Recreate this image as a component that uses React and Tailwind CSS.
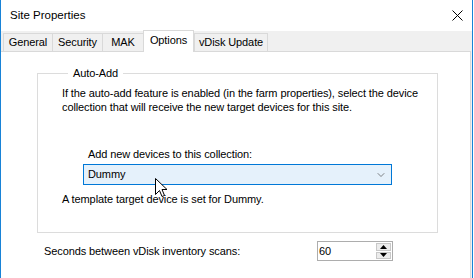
import { ChevronDown } from "lucide-react";

const tabs = [
  { label: "General", w: "w-[49px]" },
  { label: "Security", w: "w-[50px]" },
  { label: "MAK", w: "w-[41px]" },
  { label: "Options", w: "w-[51px]", active: true },
  { label: "vDisk Update", w: "w-[74px]" },
];

const CloseIcon = () => (
  <svg width="11" height="11" viewBox="0 0 11 11" className="text-black">
    <path d="M0.5 0.5 L10.5 10.5 M10.5 0.5 L0.5 10.5" stroke="currentColor" strokeWidth="1" />
  </svg>
);

const Cursor = () => (
  <svg width="13" height="21" viewBox="0 0 13 21" className="absolute left-[155px] top-[178px]">
    <path
      d="M0.5 0.5 L0.5 16.5 L4.5 12.5 L7 18.5 L9.5 17.5 L7 11.5 L12 11.5 Z"
      fill="white"
      stroke="black"
      strokeWidth="1"
      strokeLinejoin="miter"
    />
  </svg>
);

const SpinBox = ({ value }) => (
  <div className="flex h-[20px] w-[76px] items-stretch border border-[#adadad] bg-white">
    <div className="flex flex-1 items-center pl-[1px] leading-none">{value}</div>
    <div className="my-[1px] mr-[1px] flex w-[15px] flex-col gap-[1px]">
      <div className="flex flex-1 items-center justify-center border border-[#c8c8c8] bg-[#ececec]">
        <svg width="7" height="4" viewBox="0 0 7 4">
          <path d="M3.5 0 L7 4 L0 4 Z" fill="#000" />
        </svg>
      </div>
      <div className="flex flex-1 items-center justify-center border border-[#c8c8c8] bg-[#ececec]">
        <svg width="7" height="4" viewBox="0 0 7 4">
          <path d="M0 0 L7 0 L3.5 4 Z" fill="#000" />
        </svg>
      </div>
    </div>
  </div>
);

export default function App() {
  return (
    <div className="relative h-[278px] w-[474px] overflow-hidden bg-white font-['Liberation_Sans',Arial,sans-serif] text-[11px] tracking-[-0.1px] text-black">
      <div className="flex h-full w-[473px] flex-col border-x border-[#1883d7]">
        <div className="flex h-[31px] items-center justify-between bg-white pl-[9px] pr-[9px]">
          <span className="text-[11.5px] tracking-normal">Site Properties</span>
          <CloseIcon />
        </div>

        <div className="flex flex-1 flex-col bg-[#f0f0f0] pr-[1px]">
          <div className="flex h-[20px] items-end pl-[2px]">
            {tabs.map((t, i) => (
              <div
                key={t.label}
                className={
                  t.active
                    ? `relative z-10 -mb-px flex h-[22px] ${t.w} items-center justify-center whitespace-nowrap border-x border-t border-[#d9d9d9] bg-white pb-[2px]`
                    : `flex h-[18px] ${t.w} items-center justify-center whitespace-nowrap border-t border-l border-[#d9d9d9] bg-[#f0f0f0] ${i === tabs.length - 1 ? "border-r" : ""}`
                }
              >
                {t.label}
              </div>
            ))}
          </div>

          <div className="flex flex-1 flex-col border-t border-r border-[#d9d9d9] bg-white">
            <fieldset className="mt-[14px] ml-[36px] w-[401px] border border-[#dcdcdc] pt-[6px] pb-[26px] pl-[24px]">
              <legend className="ml-[6px] px-[5px] leading-[14px]">Auto-Add</legend>
              <p className="whitespace-nowrap leading-[14px]">
                If the auto-add feature is enabled (in the farm properties), select the device
                <br />
                collection that will receive the new target devices for this site.
              </p>
              <div className="mt-[33px] ml-[26px] leading-[14px]">Add new devices to this collection:</div>
              <div className="mt-[3px] ml-[21px] flex h-[21px] w-[309px] items-center justify-between border border-[#0078d7] bg-[#e5f1fb] pl-[4px] pr-[4px]">
                <span>Dummy</span>
                <ChevronDown size={12} strokeWidth={1.3} className="text-[#444]" />
              </div>
              <div className="mt-[7px] leading-[14px]">A template target device is set for Dummy.</div>
            </fieldset>

            <div className="mt-[8px] flex items-center">
              <span className="ml-[43px] w-[273px]">Seconds between vDisk inventory scans:</span>
              <SpinBox value="60" />
            </div>
          </div>
        </div>
      </div>
      <Cursor />
    </div>
  );
}
